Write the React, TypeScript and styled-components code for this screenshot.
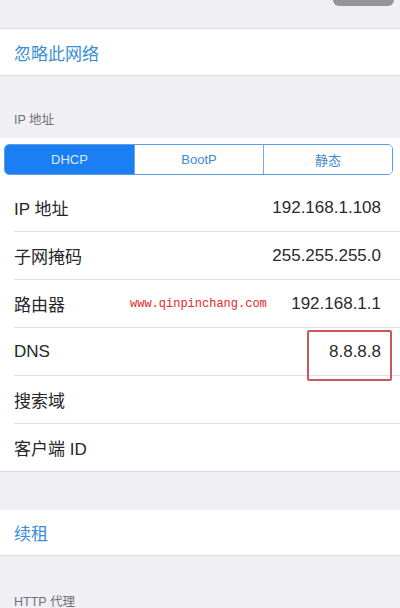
import styled, { createGlobalStyle } from 'styled-components';

const GlobalStyle = createGlobalStyle`
  body {
    margin: 0;
    background: #efeff4;
    font-family: "Liberation Sans", "Noto Sans CJK SC", sans-serif;
    -webkit-font-smoothing: antialiased;
  }
`;

const Page = styled.div`
  width: 400px;
  height: 608px;
  overflow: hidden;
  background: #efeff4;
  display: flex;
  flex-direction: column;
`;

const TopBar = styled.div`
  height: 28px;
  flex-shrink: 0;
  display: flex;
  justify-content: flex-end;
  padding-right: 6px;
  border-bottom: 1px solid #dcdce0;
`;

const PillEdge = styled.div`
  width: 61px;
  height: 6px;
  background: #939398;
  border-radius: 0 0 12px 12px;
`;

const Cell = styled.div<{ $height: number }>`
  height: ${(p) => p.$height}px;
  flex-shrink: 0;
  background: #fff;
  display: flex;
  align-items: center;
  padding-left: 14px;
  border-bottom: 1px solid #dcdce0;
`;

const ActionText = styled.span`
  font-size: 17px;
  color: #3a8ed4;
`;

const SectionHeader = styled.div<{ $height: number; $pad?: number }>`
  height: ${(p) => p.$height}px;
  flex-shrink: 0;
  display: flex;
  align-items: flex-end;
  padding: 0 0 ${(p) => p.$pad ?? 10}px 14px;
  box-sizing: border-box;
  font-size: 12.5px;
  color: #707076;
`;

const Group = styled.div`
  flex-shrink: 0;
  background: #fff;
  border-bottom: 1px solid #dcdce0;
  display: flex;
  flex-direction: column;
`;

const Segmented = styled.div`
  margin: 6px 7px 9px 4px;
  height: 31px;
  display: grid;
  grid-template-columns: 1fr 1fr 1fr;
  border: 1px solid #5d9ee0;
  border-radius: 5px;
  overflow: hidden;
  box-sizing: border-box;
`;

const Segment = styled.div<{ $active?: boolean }>`
  display: flex;
  align-items: center;
  justify-content: center;
  font-size: 13px;
  background: ${(p) => (p.$active ? '#1a7ff2' : '#fff')};
  color: ${(p) => (p.$active ? '#dcecff' : '#3f8ad2')};
  & + & {
    border-left: 1px solid #7aa9d8;
  }
`;

const Row = styled.div<{ $last?: boolean }>`
  position: relative;
  height: 47px;
  margin-left: 14px;
  padding-right: 19px;
  display: flex;
  align-items: center;
  justify-content: space-between;
  border-bottom: ${(p) => (p.$last ? 'none' : '1px solid #e0e0e4')};
  font-size: 17px;
  color: #262628;
`;

const Value = styled.span`
  color: #2a2a2c;
`;

const Watermark = styled.span`
  position: absolute;
  left: 116px;
  top: 50%;
  transform: translateY(-50%);
  font-family: "Liberation Mono", monospace;
  font-size: 12px;
  color: #e8262a;
`;

const Highlight = styled.div`
  position: absolute;
  right: 8px;
  top: 2px;
  width: 85px;
  height: 51px;
  box-sizing: border-box;
  border: 2px solid #c9575b;
  border-radius: 2px;
`;

const rows = [
  { label: 'IP 地址', value: '192.168.1.108' },
  { label: '子网掩码', value: '255.255.255.0' },
  { label: '路由器', value: '192.168.1.1', mark: true },
  { label: 'DNS', value: '8.8.8.8', boxed: true },
  { label: '搜索域', value: '' },
  { label: '客户端 ID', value: '' },
];

export default function App() {
  return (
    <>
      <GlobalStyle />
      <Page>
        <TopBar>
          <PillEdge />
        </TopBar>
        <Cell $height={46}>
          <ActionText>忽略此网络</ActionText>
        </Cell>
        <SectionHeader $height={62}>IP 地址</SectionHeader>
        <Group>
          <Segmented>
            <Segment $active>DHCP</Segment>
            <Segment>BootP</Segment>
            <Segment>静态</Segment>
          </Segmented>
          {rows.map((r, i) => (
            <Row key={r.label} $last={i === rows.length - 1}>
              <span>{r.label}</span>
              <Value>{r.value}</Value>
              {r.mark && <Watermark>www.qinpinchang.com</Watermark>}
              {r.boxed && <Highlight />}
            </Row>
          ))}
        </Group>
        <SectionHeader $height={38} />
        <Cell $height={45}>
          <ActionText>续租</ActionText>
        </Cell>
        <SectionHeader $height={54} $pad={0}>HTTP 代理</SectionHeader>
      </Page>
    </>
  );
}
